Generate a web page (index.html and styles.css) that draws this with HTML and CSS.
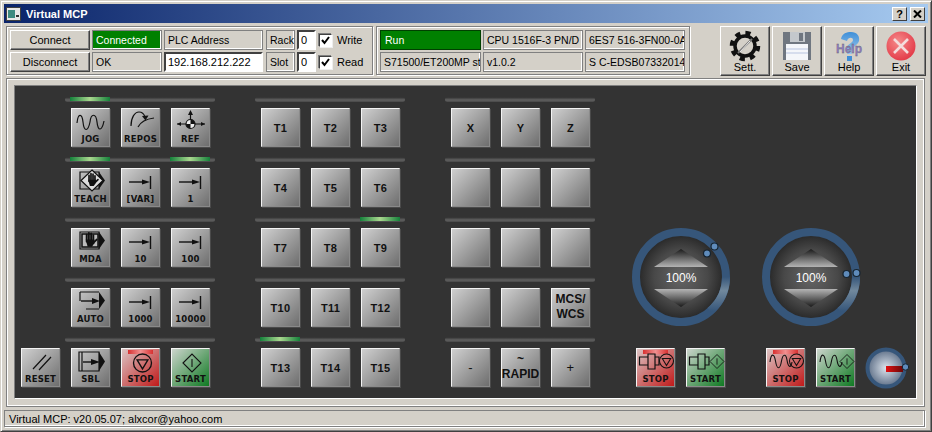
FILE: index.html
```html
<!DOCTYPE html>
<html lang="en">
<head>
    <meta charset="UTF-8">
    <title>Virtual MCP</title>
    <link rel="stylesheet" href="styles.css">
</head>
<body>
    <svg class="defs" width="0" height="0">
        <defs>
            <linearGradient id="ledRed" x1="0" x2="1" y1="0" y2="0">
                <stop offset="0" stop-color="#d83030"/><stop offset="0.5" stop-color="#f09090"/><stop offset="1" stop-color="#d83030"/>
            </linearGradient>
            <linearGradient id="triUp" x1="0" x2="0" y1="0" y2="1">
                <stop offset="0" stop-color="#1a1a1a"/><stop offset="1" stop-color="#b4b4b4"/>
            </linearGradient>
            <linearGradient id="triDown" x1="0" x2="0" y1="0" y2="1">
                <stop offset="0" stop-color="#b4b4b4"/><stop offset="1" stop-color="#1a1a1a"/>
            </linearGradient>
            <linearGradient id="ringGlow" x1="0" x2="0" y1="0" y2="1">
                <stop offset="0" stop-color="#36567a"/><stop offset="0.4" stop-color="#71889c"/><stop offset="1" stop-color="#36567a"/>
            </linearGradient>
            <radialGradient id="dialDisc">
                <stop offset="0" stop-color="#666"/><stop offset="0.6" stop-color="#484848"/><stop offset="1" stop-color="#232323"/>
            </radialGradient>
            <radialGradient id="feedDisc">
                <stop offset="0" stop-color="#dde4ec"/><stop offset="1" stop-color="#5f7088"/>
            </radialGradient>
            <linearGradient id="feedBar" x1="0" x2="1" y1="0" y2="0">
                <stop offset="0" stop-color="#e01010"/><stop offset="1" stop-color="#6a0808"/>
            </linearGradient>
            <linearGradient id="helpBlue" x1="0" x2="0" y1="0" y2="1">
                <stop offset="0" stop-color="#3f8fd8"/><stop offset="1" stop-color="#9cc8ec"/>
            </linearGradient>
            <radialGradient id="exitRed" cx="0.4" cy="0.35" r="0.8">
                <stop offset="0" stop-color="#f58a8a"/><stop offset="1" stop-color="#e02c3c"/>
            </radialGradient>

            <g id="hand">
                <path d="M-3.5 1V-6M-1.2 1V-8M1.2 1V-7.5M3.5 1V-5.5" stroke-width="2" stroke-linecap="round"/>
                <path d="M-4.5 -1H4.6V3L2 6.5H-2.5Z" fill="#111" stroke="none"/>
                <path d="M4 2L7 -1" stroke-width="2" stroke-linecap="round"/>
            </g>
            <g id="stepArrow">
                <path d="M7 13H22" stroke-width="1.4"/>
                <path d="M20 10.5L28 13L20 15.5Z" fill="#111" stroke="none"/>
                <path d="M28.5 7V20" stroke-width="1.4"/>
            </g>
            <g id="pentagon">
                <path d="M8 3H27V20H8Z" stroke-width="1.2"/>
                <path d="M27 3L33 11.5L27 20Z" fill="#111" stroke="none"/>
            </g>
            <g id="cyl">
                <path d="M2.5 8H11V16H2.5ZM11 5H18V20H11ZM18 8H22V16H18Z" stroke-width="1.2"/>
            </g>
            <g id="wave">
                <path d="M3 13C4 4 7 4 8.5 12C10 21 13 21 14.5 12C16 4 19 5 20 11C21 18 24 20 25 13" stroke-width="1.1"/>
            </g>
            <g id="stopMark">
                <circle cx="0" cy="0" r="1" stroke-width="0.15"/>
                <path d="M-0.6 -0.35H0.6L0 0.65Z" stroke-width="0.15"/>
            </g>
            <g id="startMark">
                <path d="M-1 0L0 -1L1 0L0 1Z" stroke-width="0.12"/>
                <path d="M0 -0.45V0.45" stroke-width="0.12"/>
            </g>
            <rect id="ledBar" x="6" y="1" width="25" height="4" fill="url(#ledRed)" stroke="none"/>
        </defs>
    </svg>

    <div class="win">
        <div class="titlebar">
            <svg class="title-ico" width="15" height="14" viewBox="0 0 15 14">
                <rect x="0.5" y="0.5" width="14" height="13" fill="#e8e8e8" stroke="#404040"/>
                <rect x="2" y="3" width="7" height="8" fill="#3d8a80"/>
                <rect x="10" y="8" width="3" height="2" fill="#333"/>
            </svg>
            <span class="title-text">Virtual MCP</span>
            <button class="cap-btn">?</button>
            <button class="cap-btn"><svg width="9" height="8" viewBox="0 0 9 8"><path d="M1 0.5L8 7.5M8 0.5L1 7.5" stroke="#000" stroke-width="2"/></svg></button>
        </div>

        <div class="toolbar">
            <div class="group group-conn">
                <button class="btn">Connect</button>
                <div class="cell cell-green">Connected</div>
                <div class="cell">PLC Address</div>
                <div class="cell cell-rack">Rack</div>
                <input class="field" value="0">
                <div class="chk-row"><span class="chk"><svg width="11" height="11" viewBox="0 0 11 11"><path d="M2 5L4.5 8L9 2" fill="none" stroke="#000" stroke-width="2"/></svg></span>Write</div>
                <button class="btn">Disconnect</button>
                <div class="cell">OK</div>
                <input class="field" value="192.168.212.222">
                <div class="cell cell-rack">Slot</div>
                <input class="field" value="0">
                <div class="chk-row"><span class="chk"><svg width="11" height="11" viewBox="0 0 11 11"><path d="M2 5L4.5 8L9 2" fill="none" stroke="#000" stroke-width="2"/></svg></span>Read</div>
            </div>

            <div class="group group-cpu">
                <div class="cell cell-run">Run</div>
                <div class="cell">CPU 1516F-3 PN/D</div>
                <div class="cell">6ES7 516-3FN00-0A</div>
                <div class="cell">S71500/ET200MP st</div>
                <div class="cell">v1.0.2</div>
                <div class="cell">S C-EDSB07332014</div>
            </div>

            <div class="tools">
                <button class="tool">
                    <svg width="32" height="32" viewBox="0 0 32 32">
                        <circle cx="16" cy="16" r="12.5" fill="none" stroke="#111" stroke-width="5.5" stroke-dasharray="4.9 4.92"/>
                        <circle cx="16" cy="16" r="10" fill="none" stroke="#111" stroke-width="3.5"/>
                        <path d="M9 23L23 9" stroke="#777" stroke-width="2"/>
                        <path d="M11 22L21 11" stroke="#eee" stroke-width="1"/>
                    </svg>
                    <span>Sett.</span>
                </button>
                <button class="tool">
                    <svg width="32" height="32" viewBox="0 0 32 32">
                        <path d="M2 2H30V30H2Z" fill="#6f7680"/>
                        <rect x="9" y="2" width="15" height="10" fill="#c4c8cc"/>
                        <rect x="18" y="3" width="4" height="8" fill="#6f7680"/>
                        <rect x="5" y="14" width="22" height="16" fill="#f4f6fa"/>
                        <path d="M5 19H27M5 23H27" stroke="#b8c4e0" stroke-width="1"/>
                    </svg>
                    <span>Save</span>
                </button>
                <button class="tool">
                    <svg width="32" height="32" viewBox="0 0 32 32">
                        <path d="M8 9C9 3 14 2 18 2C24 2 27 6 26 11C25 15 20 16 19 20V24H14V18C14 14 20 13 20 10C20 7 15 7 14 11Z" fill="url(#helpBlue)"/>
                        <rect x="14" y="26" width="5" height="5" fill="#3f8fd8"/>
                        <text x="16" y="23" text-anchor="middle" class="help-word">Help</text>
                    </svg>
                    <span>Help</span>
                </button>
                <button class="tool">
                    <svg width="32" height="32" viewBox="0 0 32 32">
                        <circle cx="16" cy="16" r="14.5" fill="url(#exitRed)"/>
                        <path d="M9 9L23 23M23 9L9 23" stroke="#f4dcdc" stroke-width="2.6"/>
                    </svg>
                    <span>Exit</span>
                </button>
            </div>
        </div>

        <div class="frame">
            <div class="panel">
                <div class="col col-left">
                    <div class="bank">
                        <div class="sep"><i class="lit"></i><i></i><i></i></div>
                        <div class="keys">
                            <button class="key"><svg class="ico" viewBox="0 0 37 25"><path d="M5 14C6 4 10 4 11 13C12 23 16 23 18 13C19 4 24 4 25 13C26 23 30 22 32 12"/></svg><span>JOG</span></button>
                            <button class="key"><svg class="ico" viewBox="0 0 37 25"><path d="M9 17C9 8 13 3 17 3C20 3 22 5 23 8M16 18C19 12 24 10 32 9"/><path d="M20 7L26.5 6.5L23.5 11.5Z" fill="#111" stroke="none"/></svg><span>REPOS</span></button>
                            <button class="key"><svg class="ico" viewBox="0 0 37 25"><path d="M5 15H33M18.5 15V3"/><path d="M5 15L9 13V17ZM33 15L29 13V17ZM18.5 1L16 6H21Z" fill="#111" stroke="none"/><circle cx="18.5" cy="15" r="4.5" fill="#eee"/><path d="M18.5 15V10.5A4.5 4.5 0 0 1 23 15ZM18.5 15V19.5A4.5 4.5 0 0 1 14 15Z" fill="#111" stroke="none"/></svg><span>REF</span></button>
                        </div>
                    </div>
                    <div class="bank">
                        <div class="sep"><i class="lit"></i><i></i><i class="lit"></i></div>
                        <div class="keys">
                            <button class="key"><svg class="ico" viewBox="0 0 37 25"><use href="#pentagon"/><path d="M20 1L31 11.5L20 22L9 11.5Z" fill="#ddd" stroke-width="1.2"/><use href="#hand" transform="translate(20 11.5) scale(.85)"/></svg><span>TEACH</span></button>
                            <button class="key"><svg class="ico" viewBox="0 0 37 25"><use href="#stepArrow"/></svg><span>[VAR]</span></button>
                            <button class="key"><svg class="ico" viewBox="0 0 37 25"><use href="#stepArrow"/></svg><span>1</span></button>
                        </div>
                    </div>
                    <div class="bank">
                        <div class="sep"><i></i><i></i><i></i></div>
                        <div class="keys">
                            <button class="key"><svg class="ico" viewBox="0 0 37 25"><use href="#pentagon"/><path d="M10 5H26V18H10Z" fill="#bbb" stroke-width="1.5"/><use href="#hand" transform="translate(18 11.5) scale(.95)"/></svg><span>MDA</span></button>
                            <button class="key"><svg class="ico" viewBox="0 0 37 25"><use href="#stepArrow"/></svg><span>10</span></button>
                            <button class="key"><svg class="ico" viewBox="0 0 37 25"><use href="#stepArrow"/></svg><span>100</span></button>
                        </div>
                    </div>
                    <div class="bank">
                        <div class="sep"><i></i><i></i><i></i></div>
                        <div class="keys">
                            <button class="key"><svg class="ico" viewBox="0 0 37 25"><path d="M8 3H27M8 3V12M14 20H27" stroke-width="1.2"/><path d="M27 3L33 11.5L27 20Z" fill="#111" stroke="none"/><path d="M9 12H24" stroke-width="1.4"/><path d="M20 9L28 12L20 15Z" fill="#111" stroke="none"/></svg><span>AUTO</span></button>
                            <button class="key"><svg class="ico" viewBox="0 0 37 25"><use href="#stepArrow"/></svg><span>1000</span></button>
                            <button class="key"><svg class="ico" viewBox="0 0 37 25"><use href="#stepArrow"/></svg><span>10000</span></button>
                        </div>
                    </div>
                    <div class="bank">
                        <div class="sep"><i></i><i></i><i></i></div>
                        <div class="keys">
                            <button class="key"><svg class="ico" viewBox="0 0 37 25"><path d="M11 20L24 6M17 21L29 8" stroke-width="1.2"/></svg><span>RESET</span></button>
                            <button class="key"><svg class="ico" viewBox="0 0 37 25"><path d="M7 3H27V22H7ZM10 3V22" stroke-width="1.2"/><path d="M27 3L33 12.5L27 22Z" fill="#111" stroke="none"/><path d="M11 13H24" stroke-width="1.4"/><path d="M19 10L28 13L19 16Z" fill="#111" stroke="none"/></svg><span>SBL</span></button>
                            <button class="key key-stop"><svg class="ico" viewBox="0 0 37 25"><use href="#ledBar"/><use href="#stopMark" transform="translate(20.5 14) scale(9)"/></svg><span>STOP</span></button>
                            <button class="key key-start"><svg class="ico" viewBox="0 0 37 25"><use href="#startMark" transform="translate(20 14) scale(9)"/></svg><span>START</span></button>
                        </div>
                    </div>
                </div>

                <div class="col">
                    <div class="bank">
                        <div class="sep"><i></i><i></i><i></i></div>
                        <div class="keys"><button class="key key-t">T1</button><button class="key key-t">T2</button><button class="key key-t">T3</button></div>
                    </div>
                    <div class="bank">
                        <div class="sep"><i></i><i></i><i></i></div>
                        <div class="keys"><button class="key key-t">T4</button><button class="key key-t">T5</button><button class="key key-t">T6</button></div>
                    </div>
                    <div class="bank">
                        <div class="sep"><i></i><i></i><i class="lit"></i></div>
                        <div class="keys"><button class="key key-t">T7</button><button class="key key-t">T8</button><button class="key key-t">T9</button></div>
                    </div>
                    <div class="bank">
                        <div class="sep"><i></i><i></i><i></i></div>
                        <div class="keys"><button class="key key-t">T10</button><button class="key key-t">T11</button><button class="key key-t">T12</button></div>
                    </div>
                    <div class="bank">
                        <div class="sep"><i class="lit"></i><i></i><i></i></div>
                        <div class="keys"><button class="key key-t">T13</button><button class="key key-t">T14</button><button class="key key-t">T15</button></div>
                    </div>
                </div>

                <div class="col">
                    <div class="bank">
                        <div class="sep"><i></i><i></i><i></i></div>
                        <div class="keys"><button class="key key-t">X</button><button class="key key-t">Y</button><button class="key key-t">Z</button></div>
                    </div>
                    <div class="bank">
                        <div class="sep"><i></i><i></i><i></i></div>
                        <div class="keys"><button class="key key-t"></button><button class="key key-t"></button><button class="key key-t"></button></div>
                    </div>
                    <div class="bank">
                        <div class="sep"><i></i><i></i><i></i></div>
                        <div class="keys"><button class="key key-t"></button><button class="key key-t"></button><button class="key key-t"></button></div>
                    </div>
                    <div class="bank">
                        <div class="sep"><i></i><i></i><i></i></div>
                        <div class="keys"><button class="key key-t"></button><button class="key key-t"></button><button class="key key-t key-two">MCS/<br>WCS</button></div>
                    </div>
                    <div class="bank">
                        <div class="sep"><i></i><i></i><i></i></div>
                        <div class="keys"><button class="key key-t key-thin">-</button><button class="key key-t key-two">~<br>RAPID</button><button class="key key-t key-thin">+</button></div>
                    </div>
                </div>

                <div class="drives">
                    <div class="drive">
                        <svg class="dial" width="98" height="98" viewBox="0 0 98 98">
                            <circle cx="49" cy="49" r="45" fill="url(#dialDisc)" stroke="#36567a" stroke-width="8"/>
                            <path d="M94 49A45 45 0 0 1 78 83" fill="none" stroke="url(#ringGlow)" stroke-width="8"/>
                            <path d="M49 21L76 39H22Z" fill="url(#triUp)"/>
                            <path d="M22 61H76L49 79Z" fill="url(#triDown)"/>
                            <text x="49" y="54" text-anchor="middle" class="dial-text">100%</text>
                            <circle cx="75" cy="25.5" r="3.5" fill="#5f8cbc" stroke="#162430" stroke-width="1.2"/>
                            <circle cx="82.5" cy="18.5" r="3.5" fill="#5f8cbc" stroke="#162430" stroke-width="1.2"/>
                        </svg>
                        <div class="keys">
                            <button class="key key-stop"><svg class="ico" viewBox="0 0 37 25"><use href="#ledBar"/><use href="#cyl"/><use href="#stopMark" transform="translate(29.5 12) scale(7)"/></svg><span>STOP</span></button>
                            <button class="key key-start"><svg class="ico" viewBox="0 0 37 25"><use href="#cyl"/><use href="#startMark" transform="translate(30 12.5) scale(7)"/></svg><span>START</span></button>
                        </div>
                    </div>
                    <div class="drive">
                        <svg class="dial" width="98" height="98" viewBox="0 0 98 98">
                            <circle cx="49" cy="49" r="45" fill="url(#dialDisc)" stroke="#36567a" stroke-width="8"/>
                            <path d="M94 49A45 45 0 0 1 78 83" fill="none" stroke="url(#ringGlow)" stroke-width="8"/>
                            <path d="M49 21L76 39H22Z" fill="url(#triUp)"/>
                            <path d="M22 61H76L49 79Z" fill="url(#triDown)"/>
                            <text x="49" y="54" text-anchor="middle" class="dial-text">100%</text>
                            <circle cx="84.5" cy="46" r="3.5" fill="#5f8cbc" stroke="#162430" stroke-width="1.2"/>
                            <circle cx="94.5" cy="45" r="3.5" fill="#5f8cbc" stroke="#162430" stroke-width="1.2"/>
                        </svg>
                        <div class="keys">
                            <button class="key key-stop"><svg class="ico" viewBox="0 0 37 25"><use href="#ledBar"/><use href="#wave"/><use href="#stopMark" transform="translate(29.5 12) scale(7)"/></svg><span>STOP</span></button>
                            <button class="key key-start"><svg class="ico" viewBox="0 0 37 25"><use href="#wave"/><use href="#startMark" transform="translate(30 12.5) scale(7)"/></svg><span>START</span></button>
                        </div>
                    </div>
                    <svg class="feed" width="42" height="42" viewBox="0 0 42 42">
                        <circle cx="20" cy="21" r="18.5" fill="url(#feedDisc)" stroke="#36567a" stroke-width="4"/>
                        <rect x="20" y="19" width="17" height="6" fill="url(#feedBar)"/>
                        <circle cx="39.5" cy="20" r="3.2" fill="#5f8cbc" stroke="#162430"/>
                    </svg>
                </div>
            </div>
        </div>

        <div class="status">Virtual MCP: v20.05.07; alxcor@yahoo.com</div>
    </div>
</body>
</html>
```

FILE: styles.css
```css
* {
    box-sizing: border-box;
}
body {
    margin: 0;
    background-color: #d4d0c8;
    font-family: "Liberation Sans", Arial, sans-serif;
    font-size: 11px;
    color: black;
}
.defs {
    position: absolute;
}
.win {
    width: 932px;
    height: 432px;
    padding: 3px;
    border: 1px solid;
    border-color: #d4d0c8 #404040 #404040 #d4d0c8;
    box-shadow: inset 1px 1px 0 white, inset -1px -1px 0 #808080;
    display: flex;
    flex-direction: column;
}

/* title bar */
.titlebar {
    height: 19px;
    display: flex;
    align-items: center;
    gap: 4px;
    padding: 0 3px 0 2px;
    background: linear-gradient(to right, #0a246a, #a6caf0);
    color: white;
    font-weight: bold;
}
.title-text {
    flex: 1;
    margin-left: 1px;
}
.cap-btn {
    width: 15px;
    height: 14px;
    padding: 0;
    display: flex;
    align-items: center;
    justify-content: center;
    font: bold 11px "Liberation Sans", sans-serif;
    color: black;
    background-color: #d4d0c8;
    border: 1px solid;
    border-color: white #404040 #404040 white;
    margin-left: -1px;
}

/* top toolbar */
.toolbar {
    display: flex;
    height: 50px;
    margin: 3px 0 2px 2px;
}
.group {
    display: grid;
    grid-template-rows: 20px 20px;
    gap: 2px;
    padding: 3px;
    height: 49px;
    border: 1px solid #808080;
    box-shadow: 1px 1px 0 white, inset 1px 1px 0 white;
}
.group-conn {
    width: 367px;
    grid-template-columns: 80px 70px 99px 30px 19px auto;
}
.group-cpu {
    width: 314px;
    margin-left: 3px;
    grid-template-columns: 101px 100px 100px;
}
.cell {
    padding: 0 3px;
    font-size: 10.5px;
    line-height: 18px;
    white-space: nowrap;
    overflow: hidden;
    border: 1px solid #808080;
    box-shadow: inset -1px -1px 0 white;
}
.cell-rack {
    margin-left: 1px;
    padding: 0 3px;
}
.cell-green {
    background-color: green;
    color: white;
}
.cell-run {
    padding-left: 4px;
    background-color: green;
    color: white;
    border-color: #004000;
    box-shadow: none;
}
.btn {
    padding: 0;
    font: 11px "Liberation Sans", sans-serif;
    background-color: #d4d0c8;
    border: 1px solid;
    border-color: white #404040 #404040 white;
    box-shadow: inset -1px -1px 0 #808080;
}
.field {
    width: 100%;
    min-width: 0;
    padding: 0 2px;
    font: 11px "Liberation Sans", sans-serif;
    background-color: white;
    border: 2px solid;
    border-color: #404040 white white #404040;
    outline: 1px solid #d4d0c8;
}
.chk-row {
    display: flex;
    align-items: center;
    gap: 5px;
    margin-left: 1px;
}
.chk {
    width: 13px;
    height: 13px;
    background-color: white;
    border: 1px solid;
    border-color: #404040 white white #404040;
    box-shadow: -1px -1px 0 #808080, 1px 1px 0 #eee;
}
.chk svg {
    display: block;
}
.tools {
    display: flex;
    gap: 2px;
    margin-left: 30px;
}
.tool {
    width: 50px;
    height: 50px;
    padding: 3px 0 0;
    display: flex;
    flex-direction: column;
    align-items: center;
    font: 11px "Liberation Sans", sans-serif;
    background-color: #d4d0c8;
    border: 1px solid;
    border-color: white #404040 #404040 white;
    box-shadow: inset -1px -1px 0 #808080;
}
.tool span {
    margin-top: -1px;
    line-height: 13px;
}
.help-word {
    font: bold 12px "Liberation Sans", sans-serif;
    fill: #8e7cc0;
    stroke: #666;
    stroke-width: 0.3;
}

/* dark operator panel */
.frame {
    height: 329px;
    margin: 0 3px 3px 2px;
    padding: 6px 7px 7px;
    border: 1px solid #808080;
    box-shadow: inset 1px 1px 0 white, inset -1px -1px 0 white;
}
.panel {
    height: 100%;
    display: flex;
    gap: 51px;
    padding: 11px 6px 0;
    background-color: #333;
    border: 1px solid;
    border-color: #808080 white white #808080;
}
.col {
    display: flex;
    flex-direction: column;
    width: 139px;
    flex-shrink: 0;
}
.col-left {
    width: 189px;
}
.bank {
    display: flex;
    flex-direction: column;
    align-items: flex-end;
    gap: 6px;
    height: 60px;
}
.sep {
    width: 150px;
    height: 5px;
    margin-right: -5px;
    padding: 0 5px;
    display: flex;
    gap: 11px;
    border-radius: 3px;
    background: linear-gradient(#2e2e2e, #606060 60%, #484848);
}
.sep i {
    width: 39px;
}
.sep .lit {
    width: 40px;
    margin-right: -1px;
    height: 4px;
    background: linear-gradient(to right, #14803a, #aad88e 50%, #14803a);
}
.keys {
    display: flex;
    gap: 11px;
}
.key {
    width: 39px;
    height: 39px;
    padding: 0;
    display: flex;
    flex-direction: column;
    align-items: center;
    flex-shrink: 0;
    font: bold 8.5px "DejaVu Sans", sans-serif;
    letter-spacing: 0.2px;
    color: #111;
    background: linear-gradient(135deg, #cfcfcf, #6e6e6e);
    border: 1px solid;
    border-color: #f4f4f4 #8a8a8a #8a8a8a #f4f4f4;
    box-shadow: 1px 1px 0 #4a4a4a;
}
.key span {
    line-height: 10px;
}
.ico {
    width: 37px;
    height: 25px;
    overflow: visible;
    fill: none;
    stroke: #111;
    stroke-width: 1.2;
}
.key-stop {
    background: linear-gradient(135deg, #dcc4c4, #c01a1a);
}
.key-start {
    background: linear-gradient(135deg, #ccd4cc, #0f7a22);
}
.key-t {
    justify-content: center;
    font: bold 11px "Liberation Sans", sans-serif;
    letter-spacing: 0.3px;
}
.key-two {
    font: bold 12px/15px "Liberation Sans", sans-serif;
    letter-spacing: 0;
    padding-bottom: 2px;
}
.key-thin {
    font: 13px "Liberation Sans", sans-serif;
}

/* override dials and spindle keys */
.drives {
    display: flex;
    gap: 32px;
    margin: 131px 0 0 -9px;
    align-items: flex-start;
}
.drive {
    width: 98px;
    display: flex;
    flex-direction: column;
    gap: 22px;
}
.drive .keys {
    padding-left: 4px;
}
.dial {
    display: block;
    overflow: visible;
}
.dial-text {
    font: 12px "Liberation Sans", sans-serif;
    fill: white;
}
.feed {
    margin: 119px 0 0 -26px;
    overflow: visible;
}

/* status bar */
.status {
    height: 17px;
    padding: 0 4px;
    line-height: 16px;
    border: 1px solid #808080;
    box-shadow: inset -1px -1px 0 white, 1px 1px 0 white;
    margin-right: 3px;
}
```
